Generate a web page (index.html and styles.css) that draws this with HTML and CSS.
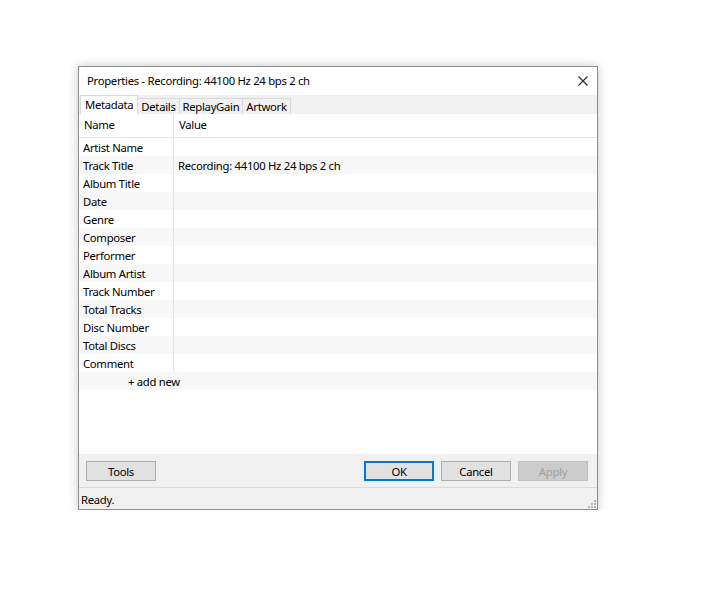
FILE: index.html
```html
<!DOCTYPE html>
<html>
<head>
<meta charset="utf-8">
<link rel="stylesheet" href="styles.css">
</head>
<body>
<div class="window">
  <div class="titlebar">
    <span class="title">Properties - Recording: 44100 Hz 24 bps 2 ch</span>
    <svg class="close" width="10" height="10" viewBox="0 0 10 10"><path d="M0.5 0.5L9.5 9.5M9.5 0.5L0.5 9.5" stroke="#2b2b2b" stroke-width="1.1" fill="none"/></svg>
  </div>
  <div class="tabs">
    <div class="tab active">Metadata</div>
    <div class="tab">Details</div>
    <div class="tab">ReplayGain</div>
    <div class="tab">Artwork</div>
  </div>
  <div class="list">
    <div class="header">
      <div class="hname">Name</div>
      <div class="hvalue">Value</div>
    </div>
    <div class="row"><div class="name">Artist Name</div><div class="value"></div></div>
    <div class="row alt"><div class="name">Track Title</div><div class="value">Recording: 44100 Hz 24 bps 2 ch</div></div>
    <div class="row"><div class="name">Album Title</div><div class="value"></div></div>
    <div class="row alt"><div class="name">Date</div><div class="value"></div></div>
    <div class="row"><div class="name">Genre</div><div class="value"></div></div>
    <div class="row alt"><div class="name">Composer</div><div class="value"></div></div>
    <div class="row"><div class="name">Performer</div><div class="value"></div></div>
    <div class="row alt"><div class="name">Album Artist</div><div class="value"></div></div>
    <div class="row"><div class="name">Track Number</div><div class="value"></div></div>
    <div class="row alt"><div class="name">Total Tracks</div><div class="value"></div></div>
    <div class="row"><div class="name">Disc Number</div><div class="value"></div></div>
    <div class="row alt"><div class="name">Total Discs</div><div class="value"></div></div>
    <div class="row"><div class="name">Comment</div><div class="value"></div></div>
    <div class="row alt addrow"><div class="add">+ add new</div></div>
  </div>
  <div class="footer">
    <button class="btn">Tools</button>
    <div class="spacer"></div>
    <button class="btn default">OK</button>
    <button class="btn">Cancel</button>
    <button class="btn disabled">Apply</button>
  </div>
  <div class="status">
    <span>Ready.</span>
    <svg class="grip" width="8" height="8" viewBox="0 0 8 8">
      <rect x="6" y="0" width="2" height="2" fill="#b8b8b8"/>
      <rect x="3" y="3" width="2" height="2" fill="#b8b8b8"/>
      <rect x="6" y="3" width="2" height="2" fill="#b8b8b8"/>
      <rect x="0" y="6" width="2" height="2" fill="#b8b8b8"/>
      <rect x="3" y="6" width="2" height="2" fill="#b8b8b8"/>
      <rect x="6" y="6" width="2" height="2" fill="#b8b8b8"/>
    </svg>
  </div>
</div>
</body>
</html>
```

FILE: styles.css
```css
html, body {
  margin: 0;
  padding: 0;
  background: #ffffff;
}
body {
  font-family: "Noto Sans", "Open Sans", sans-serif;
  font-size: 11.3px;
  letter-spacing: -0.3px;
  color: #000;
  padding: 66px 0 0 78px;
}
.window {
  width: 518px;
  height: 442px;
  border: 1px solid #8d8d8d;
  box-shadow: 0 0 10px rgba(0, 0, 0, 0.22);
  display: flex;
  flex-direction: column;
  background: #f0f0f0;
  position: relative;
}
.titlebar {
  height: 28px;
  background: #fff;
  display: flex;
  align-items: center;
  padding-left: 8px;
  padding-right: 9px;
  padding-bottom: 2px;
  box-sizing: border-box;
}
.title {
  flex: 1;
  white-space: nowrap;
}
.close {
  display: block;
  margin-top: 1px;
}
.tabs {
  height: 19px;
  display: flex;
  align-items: flex-end;
  padding-left: 1px;
  background: #f0f0f0;
}
.tab {
  height: 16px;
  line-height: 15px;
  padding: 0 3px;
  border: 1px solid #d9d9d9;
  border-bottom: none;
  margin-left: -1px;
  box-sizing: border-box;
  white-space: nowrap;
}
.tab.active {
  background: #fff;
  height: 19px;
  line-height: 17px;
  padding: 0 4px;
  margin-left: 0;
  border-color: #d9d9d9;
  position: relative;
  z-index: 1;
}
.list {
  height: 340px;
  background: #fff;
  display: flex;
  flex-direction: column;
}
.header {
  height: 23px;
  border-bottom: 1px solid #e5e5e5;
  display: flex;
  align-items: stretch;
}
.hname {
  width: 95px;
  padding-left: 5px;
  box-sizing: border-box;
  border-right: 1px solid #e5e5e5;
  line-height: 21px;
}
.hvalue {
  padding-left: 5px;
  line-height: 21px;
}
.row {
  height: 18px;
  display: flex;
  align-items: stretch;
  line-height: 19px;
}
.row.alt {
  background: #f7f7f7;
}
.name {
  width: 95px;
  padding-left: 4px;
  box-sizing: border-box;
  border-right: 1px solid #e5e5e5;
  white-space: nowrap;
}
.value {
  padding-left: 4px;
  white-space: nowrap;
}
.add {
  padding-left: 49px;
}
.footer {
  height: 34px;
  display: flex;
  align-items: flex-start;
  padding: 7px 9px 0 7px;
  box-sizing: border-box;
  gap: 7px;
  border-bottom: 1px solid #dadada;
}
.spacer {
  flex: 1;
}
.btn {
  width: 70px;
  height: 20px;
  font-family: inherit;
  font-size: inherit;
  letter-spacing: inherit;
  background: #e1e1e1;
  border: 1px solid #adadad;
  color: #000;
  padding: 0;
  margin: 0;
  box-sizing: border-box;
}
.btn.default {
  border: 2px solid #0078d7;
}
.btn.disabled {
  background: #cccccc;
  border-color: #bfbfbf;
  color: #a0a0a0;
}
.status {
  height: 20px;
  display: flex;
  align-items: center;
  padding-left: 2px;
  padding-top: 2px;
  box-sizing: border-box;
}
.grip {
  position: absolute;
  right: 1px;
  bottom: 1px;
}
```
